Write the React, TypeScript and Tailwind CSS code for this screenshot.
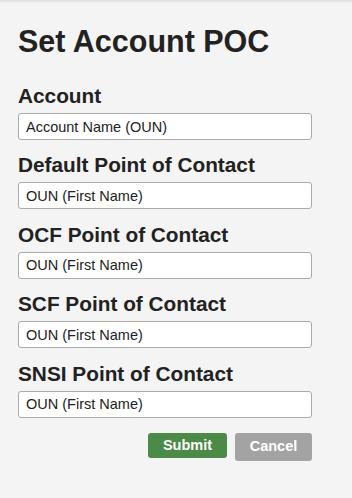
import React from "react";

const fields = [
  { label: "Account", value: "Account Name (OUN)" },
  { label: "Default Point of Contact", value: "OUN (First Name)" },
  { label: "OCF Point of Contact", value: "OUN (First Name)" },
  { label: "SCF Point of Contact", value: "OUN (First Name)" },
  { label: "SNSI Point of Contact", value: "OUN (First Name)" },
];

export default function App() {
  return (
    <div className="min-h-screen bg-[#f4f4f4] text-[#222222] font-['Liberation_Sans',Arial,sans-serif]">
      <div className="h-[3px] bg-gradient-to-b from-[#dcdcdc] to-[#f4f4f4]" />
      <div className="pl-[18px] pt-[20px]">
        <h1 className="text-[30.5px] font-bold leading-[36px]">Set Account POC</h1>
        <form className="mt-[25px] w-[294px] flex flex-col gap-[13.4px]" onSubmit={(e) => e.preventDefault()}>
          {fields.map((f) => (
            <div key={f.label} className="flex flex-col">
              <label className="text-[20.8px] font-bold leading-[24px] h-[24px] whitespace-nowrap">{f.label}</label>
              <input
                className="mt-[5px] h-[27px] w-full bg-white border border-[#ababab] rounded-[3px] pl-[7px] text-[14.5px] text-[#222222] outline-none font-['Liberation_Sans',Arial,sans-serif]"
                defaultValue={f.value}
              />
            </div>
          ))}
          <div className="flex justify-end items-start gap-[8px] mt-[2px]">
            <button
              type="submit"
              className="w-[79px] h-[25px] rounded-[3px] bg-[#4c8a47] text-white text-[14.5px] font-bold flex items-center justify-center"
            >
              Submit
            </button>
            <button
              type="button"
              className="w-[77px] h-[28px] rounded-[3px] bg-[#a3a3a3] text-white text-[14.5px] font-bold flex items-center justify-center"
            >
              Cancel
            </button>
          </div>
        </form>
      </div>
    </div>
  );
}
